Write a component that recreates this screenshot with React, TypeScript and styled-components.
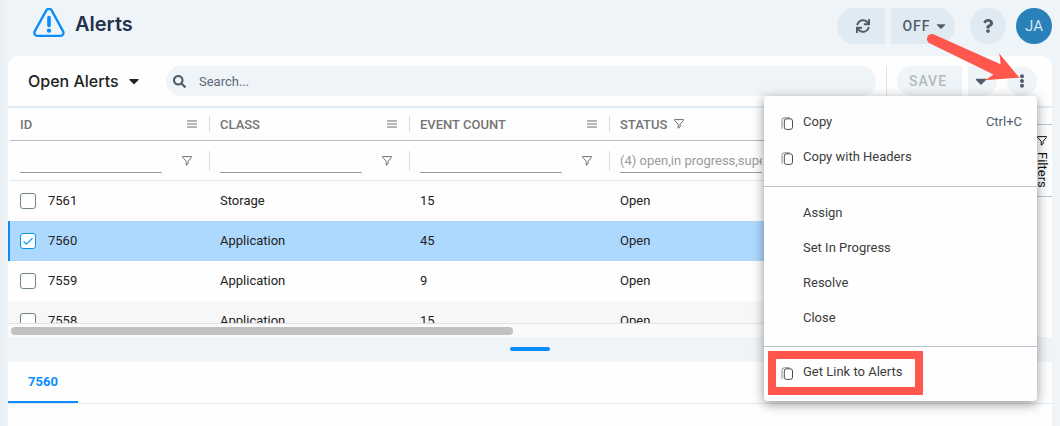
import React from "react";
import styled, { createGlobalStyle, css } from "styled-components";
import { FaSync, FaQuestion, FaSearch, FaCaretDown, FaEllipsisV } from "react-icons/fa";

const Global = createGlobalStyle`
  *, *::before, *::after { box-sizing: border-box; }
  html, body, #root { height: 100%; }
  body {
    margin: 0;
    background: #eff4f8;
    color: #222222;
    font-family: Roboto, "Liberation Sans", sans-serif;
    font-size: 13px;
    overflow: hidden;
  }
  button, input { font: inherit; color: inherit; margin: 0; }
  button { border: 0; padding: 0; background: none; cursor: pointer; }
`;

const headingFont = `Inter, "Liberation Sans", sans-serif`;

const Page = styled.div`
  min-height: 100%;
  display: flex;
  flex-direction: column;
  padding: 0 8px;
  background: linear-gradient(90deg, #e8eef2, #eff4f8 8px);
`;

const Header = styled.header`
  display: flex;
  justify-content: space-between;
  align-items: flex-start;
  height: 56px;
  padding: 8px 0 0 24px;
`;

const Brand = styled.div`
  display: flex;
  align-items: center;
  gap: 9px;
`;

const Title = styled.h1`
  margin: 0;
  font: 600 20px/32px ${headingFont};
  color: #22304a;
`;

const HeaderActions = styled.div`
  display: flex;
  align-items: center;
  gap: 10px;
`;

const Split = styled.div`
  display: flex;
  gap: 6px;
`;

const PillButton = styled.button<{ $side: "left" | "right" | "both"; $w: number; $small?: boolean }>`
  display: flex;
  align-items: center;
  justify-content: center;
  gap: 3px;
  width: ${(p) => p.$w}px;
  height: ${(p) => (p.$small ? 30 : 36)}px;
  padding: ${(p) => (p.$side === "both" ? "0" : p.$small ? "0 3px 0 0" : "0 0 0 4px")};
  background: ${(p) => (p.$small ? "#eff4f8" : "#e0eaf2")};
  color: #505c6c;
  font-size: 14px;
  font-weight: 500;
  letter-spacing: 1px;
  border-radius: ${(p) =>
    p.$side === "both" ? "18px" : p.$side === "left" ? "18px 0 0 18px" : "0 18px 18px 0"};
  &:disabled { color: #b4babc; }
`;

const HelpGap = styled.div`
  padding-left: 5px;
`;

const Avatar = styled.button`
  width: 36px;
  height: 36px;
  border-radius: 50%;
  background: #2a80b8;
  color: #d3e6f2;
  font-size: 15px;
`;

const Panel = styled.main`
  background: #fefefe;
  border-radius: 10px 10px 0 0;
`;

const Toolbar = styled.div`
  display: flex;
  align-items: center;
  gap: 10px;
  height: 52px;
  padding: 0 15px 0 20px;
  border-bottom: 2px solid #dfebf5;
`;

const ViewButton = styled.button`
  display: flex;
  align-items: center;
  gap: 7px;
  width: 128px;
  font: 500 16px/20px ${headingFont};
  white-space: nowrap;
`;

const SearchBox = styled.label`
  flex: 1;
  display: flex;
  align-items: center;
  gap: 13px;
  height: 30px;
  padding: 0 7px;
  border-radius: 15px;
  background: #eff4f8;
  color: #505c6c;
`;

const SearchInput = styled.input`
  flex: 1;
  border: 0;
  padding: 0;
  outline: 0;
  background: none;
  &::placeholder { color: #5e6977; opacity: 1; }
`;

const Divider = styled.span`
  width: 1px;
  height: 30px;
  background: #d3e4f1;
`;

const MenuAnchor = styled.div`
  position: relative;
`;

const Menu = styled.div`
  position: absolute;
  z-index: 2;
  top: 100%;
  right: 0;
  width: 273px;
  background: #fefefe;
  border-radius: 4px;
  box-shadow: 0 3px 12px rgba(0, 0, 0, 0.42);
`;

const MenuGroup = styled.div`
  padding: 8px 0 11px;
  & + & { border-top: 1px solid #bac3cb; }
  &:first-child { padding-bottom: 12px; }
  &:last-child { padding: 7px 0 12px; }
`;

const MenuItem = styled.button`
  position: relative;
  display: grid;
  grid-template-columns: 22px 1fr auto;
  align-items: center;
  width: 100%;
  height: 35px;
  padding: 0 15px 0 17px;
  text-align: left;
  color: #3c3c3c;
  & > svg { margin-top: 3px; }
`;

const Shortcut = styled.span`
  color: #505c6c;
`;

const Highlight = styled.span`
  position: absolute;
  left: 4px;
  top: -3px;
  width: 155px;
  height: 44px;
  border: 8px solid #ff574d;
`;

const Arrow = styled.svg`
  position: absolute;
  z-index: 3;
  right: 15px;
  top: -39px;
  pointer-events: none;
`;

const Body = styled.div`
  display: flex;
  height: 229px;
`;

const GridArea = styled.div`
  flex: 1;
  min-width: 0;
  display: flex;
  flex-direction: column;
`;

const GridView = styled.div`
  flex: 1;
  min-height: 0;
  overflow: hidden;
`;

const Table = styled.table`
  width: 100%;
  min-width: 1024px;
  table-layout: fixed;
  border-collapse: separate;
  border-spacing: 0;
`;

const EdgeCell = styled.td`
  width: 2px;
  padding: 0;
`;

const HeadCell = styled.th`
  width: 200px;
  height: 33px;
  padding: 0 0 0 10px;
  border-bottom: 1px solid #b7bec6;
  font-weight: 500;
  color: #747474;
`;

const FilterCell = styled.td`
  height: 40px;
  padding: 0 0 0 10px;
  border-bottom: 1px solid #dbe8f3;
`;

const HeadInner = styled.div<{ $tall?: boolean }>`
  display: flex;
  align-items: center;
  gap: 7px;
  height: ${(p) => (p.$tall ? 20 : 16)}px;
  padding-right: 12px;
  border-right: 1px solid #dadcde;
`;

const Grow = styled.span`
  flex: 1;
`;

const FilterInput = styled.input`
  width: 142px;
  height: 24px;
  padding: 0;
  border: 0;
  border-bottom: 1px solid #929ba4;
  background: none;
  outline: 0;
  color: #9a9a9a;
`;

const FilterButton = styled.button`
  display: flex;
  margin-left: 13px;
`;

const Row = styled.tr<{ $state?: "selected" | "alt" }>`
  ${(p) => p.$state === "alt" && css`background: #f7f7f7;`}
  ${(p) =>
    p.$state === "selected" &&
    css`
      background: #aed9fe;
      & > td:first-child { background: #0a8cf8; }
    `}
`;

const Cell = styled.td`
  height: 40px;
  padding: 0 10px;
`;

const CellText = styled.span`
  display: block;
  padding-bottom: 2px;
`;

const CheckLabel = styled.label`
  display: flex;
  align-items: center;
  gap: 12px;
`;

const Check = styled.input`
  appearance: none;
  width: 16px;
  height: 16px;
  border: 1px solid #6f8386;
  border-radius: 3px;
  background: #ffffff;
  &:checked {
    border-color: #0a94f0;
    background: #ffffff
      url("data:image/svg+xml,%3Csvg xmlns='http://www.w3.org/2000/svg' viewBox='0 0 14 14'%3E%3Cpath d='M2.5 7.4l3 2.8 6-6' fill='none' stroke='%230a94f0' stroke-width='1.2'/%3E%3C/svg%3E");
  }
`;

const ScrollTrack = styled.div`
  height: 14px;
  padding: 3px;
  border-top: 1px solid #e2e2e2;
  background: #fafafa;
`;

const ScrollThumb = styled.div`
  width: 49.3%;
  height: 8px;
  border-radius: 4px;
  background: #c1c1c1;
`;

const SideBar = styled.aside`
  width: 20px;
  padding-top: 16px;
`;

const SideTab = styled.button`
  display: flex;
  flex-direction: column;
  align-items: center;
  gap: 6px;
  width: 20px;
  height: 73px;
  padding-top: 11px;
  border: 1px solid #bac3cb;
  border-width: 1px 0;
  color: #111111;
  & > span { writing-mode: vertical-rl; line-height: 16px; }
`;

const Splitter = styled.div`
  display: flex;
  justify-content: center;
  height: 25px;
  padding-top: 10px;
`;

const Handle = styled.span`
  width: 40px;
  height: 4px;
  border-radius: 2px;
  background: #0a8cff;
`;

const Detail = styled.section`
  flex: 1;
  min-height: 64px;
  background: #fefefe;
`;

const Tabs = styled.div`
  display: flex;
  height: 42px;
  border-bottom: 1px solid #e2eaf2;
`;

const Tab = styled.button`
  padding: 0 20px;
  border-bottom: 2px solid #0a8cff;
  font-weight: 700;
  color: #0a8cff;
`;

const WarningLogo = () => (
  <svg width="34" height="32" viewBox="0 0 34 32" fill="none" aria-hidden="true">
    <path
      d="M14.3 2.4a3.1 3.1 0 0 1 5.4 0l11.400 21a3 3 0 0 1-2.600 4.400H5.300a3 3 0 0 1-2.600-4.400z"
      stroke="#0a8cff"
      strokeWidth="2.3"
    />
    <path d="M17 9.500v8" stroke="#0a8cff" strokeWidth="3.6" strokeLinecap="round" />
    <circle cx="17" cy="22.6" r="2.2" fill="#0a8cff" />
  </svg>
);

const Funnel = ({ color = "#6f6f6f" }: { color?: string }) => (
  <svg width="10" height="10" viewBox="0 0 10 10" fill="none" stroke={color} aria-hidden="true">
    <path d="M.5.6h9v.8L6.1 5.2v2.6L4.2 9.2v-4L.5 1.4z" />
  </svg>
);

const Bars = () => (
  <svg width="10" height="8" viewBox="0 0 10 8" fill="#b4b4b4" aria-hidden="true">
    <path d="M0 0h10v2H0zM0 3h10v2H0zM0 6h10v2H0z" />
  </svg>
);

const CopyIcon = () => (
  <svg width="12" height="13" viewBox="0 0 12 13" fill="none" aria-hidden="true">
    <path d="M1 11.800V3.200A2.400 2.400 0 0 1 3.400.8h5.400" stroke="#8a8a8a" />
    <rect x="3.3" y="1.8" width="8.200" height="10.600" rx="2.2" stroke="#4c4c4c" />
  </svg>
);

const columns = [
  { name: "ID" },
  { name: "CLASS" },
  { name: "EVENT COUNT" },
  { name: "STATUS", filter: "(4) open,in progress,superseded" },
];

const alerts = [
  { id: "7561", cls: "Storage", count: 15, status: "Open" },
  { id: "7560", cls: "Application", count: 45, status: "Open", state: "selected" as const },
  { id: "7559", cls: "Application", count: 9, status: "Open" },
  { id: "7558", cls: "Application", count: 15, status: "Open", state: "alt" as const },
];

const AlertsTable = () => (
  <Table>
    <thead>
      <tr>
        <EdgeCell />
        {columns.map((c) => (
          <HeadCell key={c.name} scope="col">
            <HeadInner>
              <span>{c.name}</span>
              {c.filter && <Funnel />}
              <Grow />
              <Bars />
            </HeadInner>
          </HeadCell>
        ))}
        <td />
      </tr>
      <tr>
        <EdgeCell />
        {columns.map((c) => (
          <FilterCell key={c.name}>
            <HeadInner $tall>
              <FilterInput aria-label={`${c.name} filter`} defaultValue={c.filter} />
              <FilterButton aria-label={`Filter ${c.name}`}>
                <Funnel />
              </FilterButton>
            </HeadInner>
          </FilterCell>
        ))}
        <td />
      </tr>
    </thead>
    <tbody>
      {alerts.map((a) => (
        <Row key={a.id} $state={a.state}>
          <EdgeCell />
          <Cell>
            <CheckLabel>
              <Check type="checkbox" defaultChecked={a.state === "selected"} />
              <CellText>{a.id}</CellText>
            </CheckLabel>
          </Cell>
          {[a.cls, a.count, a.status].map((value, i) => (
            <Cell key={i}>
              <CellText>{value}</CellText>
            </Cell>
          ))}
          <td />
        </Row>
      ))}
    </tbody>
  </Table>
);

const ActionsMenu = () => (
  <Menu role="menu">
    <MenuGroup>
      <MenuItem role="menuitem">
        <CopyIcon />
        <span>Copy</span>
        <Shortcut>Ctrl+C</Shortcut>
      </MenuItem>
      <MenuItem role="menuitem">
        <CopyIcon />
        <span>Copy with Headers</span>
      </MenuItem>
    </MenuGroup>
    <MenuGroup>
      {["Assign", "Set In Progress", "Resolve", "Close"].map((label) => (
        <MenuItem key={label} role="menuitem">
          <span />
          <span>{label}</span>
        </MenuItem>
      ))}
    </MenuGroup>
    <MenuGroup>
      <MenuItem role="menuitem">
        <CopyIcon />
        <span>Get Link to Alerts</span>
        <Highlight />
      </MenuItem>
    </MenuGroup>
  </Menu>
);

export default function App() {
  return (
    <>
      <Global />
      <Page>
        <Header>
          <Brand>
            <WarningLogo />
            <Title>Alerts</Title>
          </Brand>
          <HeaderActions>
            <Split>
              <PillButton $side="left" $w={48} aria-label="Refresh">
                <FaSync size={14} />
              </PillButton>
              <PillButton $side="right" $w={64}>
                OFF
                <FaCaretDown size={14} />
              </PillButton>
            </Split>
            <HelpGap>
              <PillButton $side="both" $w={36} aria-label="Help">
                <FaQuestion size={14} />
              </PillButton>
            </HelpGap>
            <Avatar>JA</Avatar>
          </HeaderActions>
        </Header>
        <Panel>
          <Toolbar>
            <ViewButton>
              Open Alerts
              <FaCaretDown size={16} />
            </ViewButton>
            <SearchBox>
              <FaSearch size={13} />
              <SearchInput type="text" placeholder="Search..." aria-label="Search" />
            </SearchBox>
            <Divider />
            <Split>
              <PillButton $side="left" $w={65} $small disabled>
                SAVE
              </PillButton>
              <PillButton $side="right" $w={29} $small aria-label="Save options">
                <FaCaretDown size={18} />
              </PillButton>
            </Split>
            <MenuAnchor>
              <PillButton $side="both" $w={30} $small aria-label="More actions">
                <FaEllipsisV size={14} />
              </PillButton>
              <ActionsMenu />
              <Arrow width="100" height="60" viewBox="0 0 100 60" aria-hidden="true">
                <path
                  d="M12 7.400L78.600 37.300Q78.400 31 77 26.300L97.500 50.700L62 53.300Q67 51 71.500 47.400L8 16.600A5 5 0 0 1 12 7.400z"
                  fill="#ff574d"
                />
              </Arrow>
            </MenuAnchor>
          </Toolbar>
          <Body>
            <GridArea>
              <GridView>
                <AlertsTable />
              </GridView>
              <ScrollTrack>
                <ScrollThumb />
              </ScrollTrack>
            </GridArea>
            <SideBar>
              <SideTab>
                <Funnel color="#111111" />
                <span>Filters</span>
              </SideTab>
            </SideBar>
          </Body>
        </Panel>
        <Splitter>
          <Handle />
        </Splitter>
        <Detail>
          <Tabs role="tablist">
            <Tab role="tab" aria-selected="true">
              7560
            </Tab>
          </Tabs>
        </Detail>
      </Page>
    </>
  );
}
